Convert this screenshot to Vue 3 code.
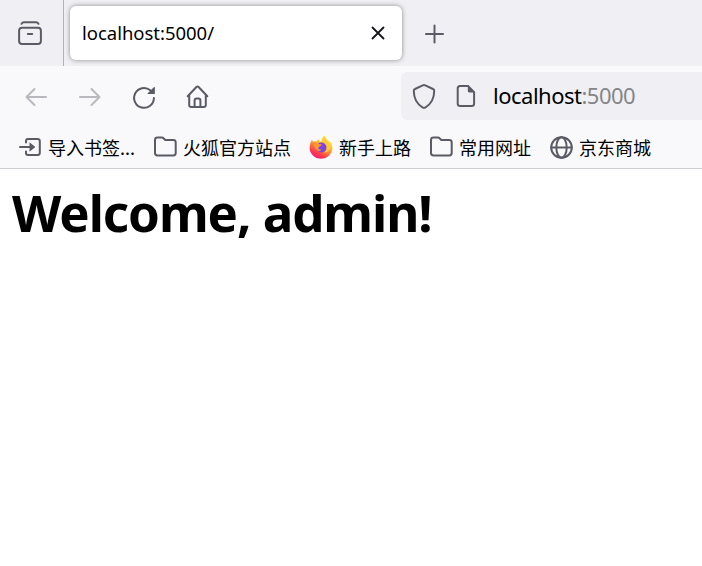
<script setup>
const bookmarks = [
  { icon: 'import', label: '导入书签...' },
  { icon: 'folder', label: '火狐官方站点' },
  { icon: 'firefox', label: '新手上路' },
  { icon: 'folder', label: '常用网址' },
  { icon: 'globe', label: '京东商城' },
]
</script>

<template>
  <div class="browser">
    <header class="tabs">
      <div class="recent">
        <svg width="26" height="26" viewBox="0 0 26 26" class="ico">
          <path d="M4.5 3.8Q5.2 2.3 7 2.3H19Q20.800 2.300 21.500 3.800" />
          <rect x="2.100" y="7.800" width="21.800" height="16.300" rx="3" />
          <path d="M10.800 14H15.200" />
        </svg>
      </div>
      <div class="tab">
        <span class="tab-title">localhost:5000/</span>
        <svg width="14" height="14" viewBox="0 0 14 14" class="close"><path d="M1.500 1.500L12.500 12.500M12.500 1.500L1.500 12.500" /></svg>
      </div>
      <svg width="20" height="20" viewBox="0 0 20 20" class="ico plus"><path d="M10.500 1.500V18.500M2 10H19" /></svg>
    </header>

    <nav class="toolbar">
      <svg width="24" height="24" viewBox="0 0 24 24" class="ico dim"><path d="M22 13H2.500M10.500 5L2.500 13L10.500 21" /></svg>
      <svg width="24" height="24" viewBox="0 0 24 24" class="ico dim"><path d="M2 13H21.500M13.500 5L21.500 13L13.500 21" /></svg>
      <svg width="24" height="24" viewBox="0 0 24 24" class="ico">
        <path d="M21.900 14A9.900 9.900 0 1 1 18.300 6.300" />
        <path class="solid" d="M22.900 3.200V9.500Q22.900 10.100 22.300 10.100H16Q15.100 9.900 15.700 9.200L21.800 3.200Q22.600 2.600 22.900 3.200Z" />
      </svg>
      <svg width="24" height="24" viewBox="0 0 24 24" class="ico home">
        <path d="M1.700 12.200L10.400 3Q11.500 2 12.600 3L21.300 12.200M3.200 10.800V21Q3.200 23 5.400 23H17.600Q19.800 23 19.800 21V10.800" />
        <path d="M8.600 22.800V16.600Q8.600 14.600 10.600 14.600H12.400Q14.400 14.600 14.400 16.600V22.800" />
      </svg>
      <div class="address">
        <svg width="24" height="26" viewBox="0 0 24 26" class="ico">
          <path d="M12 2Q12.700 2 13.300 2.400L21 6Q22.200 6.500 22.200 7.800Q22.200 13.500 20 17.600Q17.700 21.900 13.500 24.300Q12 25.100 10.500 24.300Q6.300 21.900 4 17.600Q1.800 13.500 1.800 7.800Q1.800 6.500 3 6L10.700 2.400Q11.300 2 12 2Z" />
        </svg>
        <svg width="20" height="24" viewBox="0 0 20 24" class="ico page">
          <path d="M4 2H12L18.100 8.100V19.500Q18.100 22 15.600 22H4.200Q1.700 22 1.700 19.500V4.500Q1.700 2 4 2Z" />
          <path class="solid" d="M11.800 1.500L18.700 8.500H13.200Q11.800 8.500 11.800 7.100Z" />
        </svg>
        <span class="url">localhost<span class="port">:5000</span></span>
      </div>
    </nav>

    <div class="bookmarks">
      <div v-for="b in bookmarks" :key="b.label" class="bookmark">
        <svg v-if="b.icon === 'import'" width="24" height="24" viewBox="0 0 24 24" class="ico">
          <path d="M8 7.500V6Q8 4 10 4H19.500Q21.800 4 21.800 6.300V17.700Q21.800 20 19.500 20H10Q8 20 8 18V16.500M2 12H13" />
          <path class="solid" d="M11.500 7.300L16.800 11.500Q17.300 12 16.800 12.500L11.500 16.700Z" />
        </svg>
        <svg v-else-if="b.icon === 'folder'" width="24" height="24" viewBox="0 0 24 24" class="ico">
          <path d="M4.500 2.600H8.800Q10 2.600 10.800 3.500L12.300 5H20.300Q22.700 5 22.700 7.400V18Q22.700 20.400 20.300 20.400H4.500Q2 20.400 2 18V5Q2 2.600 4.500 2.600Z" />
        </svg>
        <svg v-else-if="b.icon === 'globe'" width="24" height="24" viewBox="0 0 24 24" class="ico">
          <circle cx="12.500" cy="12.500" r="10.300" /><ellipse cx="12.500" cy="12.500" rx="5.200" ry="10.300" /><path d="M2.200 12.500H22.800" />
        </svg>
        <svg v-else width="24" height="24" viewBox="0 0 24 24">
          <defs>
            <linearGradient id="flame" x1=".8" y1=".1" x2=".3" y2="1">
              <stop offset="0" stop-color="#fff044" /><stop offset=".3" stop-color="#ffc52e" /><stop offset=".58" stop-color="#ff7537" /><stop offset=".8" stop-color="#ff3550" /><stop offset="1" stop-color="#e92086" />
            </linearGradient>
            <radialGradient id="core" cx=".55" cy=".3" r=".8">
              <stop offset="0" stop-color="#8d3ee8" /><stop offset="1" stop-color="#624be0" />
            </radialGradient>
          </defs>
          <path fill="url(#flame)" d="M3 4.700Q3.400 6 4.500 6.700Q6 6 7.600 6.300Q8.500 4.700 10.300 4.200Q9.700 6 11 7L13 5.200Q12.600 2.200 15.800.5Q16 3.200 18.800 5.200Q20.700 6.500 21.300 8Q21.600 7 21.300 6.300Q23.500 9.200 23.400 12.800A11.400 11 0 0 1 .6 12.800Q.5 8 3 4.700Z" />
          <circle cx="12.400" cy="12.500" r="5" fill="url(#core)" />
          <path fill="#ff9a2f" d="M5 8.800Q8 7.200 10.300 9.200H12.800Q12.600 10.700 10.600 11.200Q10.400 12.500 8.800 13Q10.300 15.300 12.700 14.300Q11.400 16.800 8.800 15.600Q5 13.500 5 8.800Z" />
          <path fill="#ffc93b" d="M13.200 5.400Q17.500 7 18 11.500Q18.200 15.700 15 17.800Q20.800 17.200 21.200 11Q20.900 7.700 17 4.500L15.600 1.200Q13 3 13.200 5.400Z" />
        </svg>
        <span class="label">{{ b.label }}</span>
      </div>
    </div>

    <main class="content"><h1>Welcome, admin!</h1></main>
  </div>
</template>

<style>
body { margin: 0; background: #fff; }
</style>

<style scoped>
.browser { width: 702px; height: 566px; overflow: hidden; background: #fff; color: #000; font-family: "Noto Sans", "Noto Sans CJK SC", sans-serif; }
svg { display: block; flex: none; overflow: visible; }
.ico { fill: none; stroke: #5b5b66; stroke-width: 2; stroke-linecap: round; stroke-linejoin: round; }
.ico .solid { fill: #5b5b66; stroke: none; }
.tabs { display: flex; align-items: center; height: 66px; background: #f0f0f4; }
.recent { box-sizing: border-box; width: 64px; height: 66px; padding: 20px 0 0 17px; border-right: 1px solid #b1b1b7; }
.tab { box-sizing: border-box; display: flex; align-items: center; justify-content: space-between; width: 332px; height: 54px; margin-left: 6px; padding: 0 17px 0 12px; border-radius: 6px; background: #fff; box-shadow: 0 0 5px rgba(0, 0, 0, .42); }
.tab-title { font-size: 18.5px; line-height: 24px; letter-spacing: -.02px; }
.close { fill: none; stroke: #15141a; stroke-width: 1.8; stroke-linecap: round; }
.plus { margin: 2px 0 0 22px; }
.toolbar { display: flex; align-items: center; height: 60px; padding-left: 24px; background: #f9f9fb; gap: 30px; }
.dim { opacity: .4; }
.address { box-sizing: border-box; display: flex; align-items: center; flex: 1; height: 48px; margin-left: 161px; padding-left: 11px; border-radius: 6px 0 0 6px; background: #f0f0f4; }
.page { margin-left: 20px; }
.url { margin-left: 17px; padding-bottom: 2px; font-size: 22px; line-height: 30px; letter-spacing: -.5px; white-space: nowrap; }
.port { color: #858588; }
.bookmarks { box-sizing: border-box; display: flex; align-items: center; height: 43px; padding: 0 0 0 18px; gap: 18px; background: #f9f9fb; border-bottom: 1px solid #ccccd1; }
.bookmark { display: flex; align-items: center; gap: 6px; }
.label { font-family: "Noto Sans CJK SC", sans-serif; font-size: 18px; line-height: 24px; white-space: nowrap; }
.content { padding: 8px 12px; }
h1 { margin: 0; font-size: 51px; line-height: 70px; font-weight: 700; letter-spacing: -1.05px; white-space: nowrap; }
</style>
